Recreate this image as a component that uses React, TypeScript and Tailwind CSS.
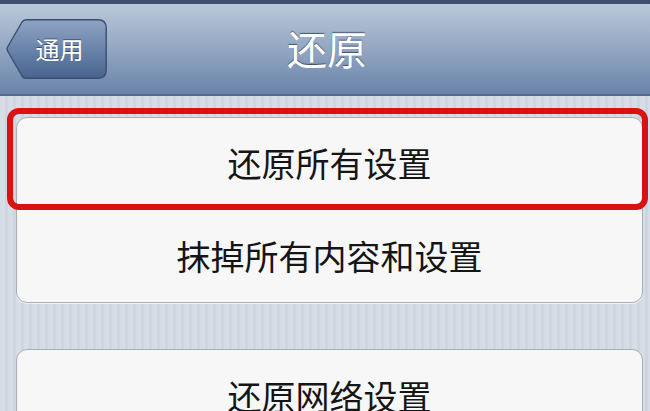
import React from "react";

const cjk = { fontFamily: '"Noto Sans CJK SC", "Noto Sans", sans-serif' };

function BackButton() {
  return (
    <div className="relative w-[101px] h-[60px] flex items-center justify-center pl-[6px]">
      <svg className="absolute inset-0" width="101" height="60" viewBox="0 0 101 60">
        <defs>
          <linearGradient id="bb" x1="0" y1="0" x2="0" y2="1">
            <stop offset="0" stopColor="#8ea4c2" />
            <stop offset="0.5" stopColor="#6a84aa" />
            <stop offset="1" stopColor="#48648f" />
          </linearGradient>
        </defs>
        <path
          d="M20 0.8 L92 0.8 Q100.2 0.8 100.2 9 L100.2 51 Q100.2 59.2 92 59.2 L20 59.2 Q17.5 59.2 16 57 L1.6 32 Q0.6 30 1.6 28 L16 3 Q17.5 0.8 20 0.8 Z"
          fill="url(#bb)"
          stroke="#3a4e6f"
          strokeWidth="1.4"
        />
      </svg>
      <span
        className="relative text-[24px] leading-none text-white [text-shadow:0_-1px_0_rgba(30,45,70,0.6)]"
        style={cjk}
      >
        通用
      </span>
    </div>
  );
}

export default function App() {
  return (
    <div className="w-[650px] h-[411px] overflow-hidden flex flex-col bg-[repeating-linear-gradient(90deg,#d7dde7_0px,#d7dde7_5px,#cfd5e0_5px,#cfd5e0_8px)]" style={cjk}>
      <div className="h-[96px] shrink-0 border-t-[4px] border-t-[#3c4f6e] border-b-[2px] border-b-[#546a8c] bg-linear-to-b from-[#bac8da] via-[#93a7c2] to-[#6983a9] grid grid-cols-[1fr_auto_1fr] items-center">
        <div className="pl-[6px] flex items-center">
          <BackButton />
        </div>
        <div className="text-[40px] leading-none text-white pb-[2px] pl-[4px] [text-shadow:0_-1px_1px_rgba(40,55,85,0.75)]">
          还原
        </div>
        <div />
      </div>

      <div className="flex flex-col pl-[16px] pr-[7px] pt-[21px] gap-[46px]">
        <div className="rounded-[11px] border border-[#a9aeb6] bg-[#f7f7f7] flex flex-col shadow-[0_1px_0_rgba(255,255,255,0.6)]">
          <div className="relative h-[91px] flex items-center justify-center border-b border-[#b4b8bf]">
            <span className="text-[34px] leading-none text-[#151515]">还原所有设置</span>
            <div className="absolute top-[-10px] left-[-10px] right-[-6px] bottom-[-2px] border-[6px] border-[#d81212] rounded-[12px]" />
          </div>
          <div className="h-[93px] flex items-center justify-center">
            <span className="text-[34px] leading-none text-[#151515]">抹掉所有内容和设置</span>
          </div>
        </div>

        <div className="rounded-[11px] border border-[#a9aeb6] bg-[#f7f7f7] flex flex-col">
          <div className="h-[91px] flex items-center justify-center">
            <span className="text-[34px] leading-none text-[#151515]">还原网络设置</span>
          </div>
        </div>
      </div>
    </div>
  );
}
